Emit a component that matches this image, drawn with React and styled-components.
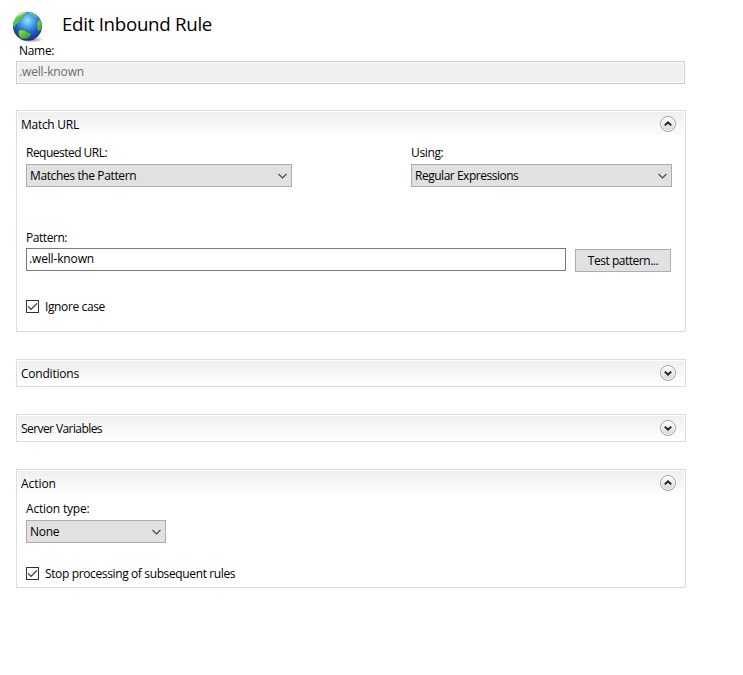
import React from "react";
import styled, { createGlobalStyle } from "styled-components";

const GlobalStyle = createGlobalStyle`
  * { box-sizing: border-box; }
  body {
    margin: 0;
    background: #fff;
    color: #000;
    font: 12px/16px "Open Sans", "Noto Sans", sans-serif;
  }
`;

const Page = styled.main`
  width: 743px;
  height: 675px;
  padding: 8px 57px 0 16px;
  overflow: hidden;
  background: #fff;
`;

const Header = styled.header`
  display: flex;
  height: 34px;
  margin-left: -6px;
`;

const Title = styled.h1`
  margin: 3px 0 0 16px;
  font-size: 18.7px;
  line-height: 26px;
  font-weight: 400;
  white-space: nowrap;
  letter-spacing: -0.28px;
`;

const Text = styled.span`
  display: block;
  height: 16px;
  line-height: 18px;
  white-space: nowrap;
  letter-spacing: ${(p) => p.$track || 0}px;
`;

const NameLabel = styled.div`
  height: 19px;
  padding-left: 3px;
`;

const NameBox = styled.div`
  width: 669px;
  height: 23px;
  padding: 1px 2px;
  border: 1px solid #ccc;
  box-shadow: inset 0 0 0 1px #fff;
  background: #f0f0f0;
  color: #6d6d6d;
`;

const Panel = styled.section`
  width: 670px;
  height: ${(p) => p.$height}px;
  margin-top: ${(p) => p.$gap || 27}px;
  border: 1px solid #dcdcdc;
  padding: 1px;
`;

const PanelHeader = styled.div`
  display: flex;
  justify-content: space-between;
  height: ${(p) => (p.$closed ? 24 : 26)}px;
  padding: 4px 7px 0 3px;
  background: linear-gradient(#efefef, #fff);
`;

const Toggle = styled.svg`
  display: block;
  width: 18px;
  height: 18px;
  margin-top: -1px;
`;

const PanelBody = styled.div`
  padding: ${(p) => p.$top}px 0 0 8px;
`;

const FieldRow = styled.div`
  display: flex;
  gap: 119px;
`;

const Field = styled.div`
  display: flex;
  flex-direction: column;
  gap: 4px;
`;

const Select = styled.div`
  display: flex;
  justify-content: space-between;
  width: ${(p) => p.$width}px;
  height: 23px;
  padding: 2px 3px 0;
  border: 1px solid #adadad;
  background: #e1e1e1;
`;

const SelectArrow = styled.svg`
  width: 11px;
  height: 7px;
  margin-top: 6px;
`;

const PatternField = styled.div`
  margin-top: 42px;
`;

const PatternRow = styled.div`
  display: flex;
  gap: 9px;
  margin-top: 3px;
`;

const Input = styled.div`
  width: 540px;
  height: 23px;
  padding: 1px 2px;
  border: 1px solid #7a7a7a;
  background: #fff;
`;

const Button = styled.div`
  display: flex;
  justify-content: center;
  width: 96px;
  height: 23px;
  margin-top: 1px;
  padding-top: 2px;
  border: 1px solid #adadad;
  background: #e1e1e1;
`;

const CheckRow = styled.div`
  display: flex;
  gap: 6px;
  margin-top: ${(p) => p.$top}px;
`;

const CheckMark = styled.svg`
  width: 13px;
  height: 13px;
  margin-top: 2px;
`;

function Globe() {
  return (
    <svg width="36" height="36" viewBox="0 0 36 36">
      <defs>
        <radialGradient id="ocean" cx=".5" cy=".3" r=".72">
          <stop offset="0" stopColor="#9be4fa" />
          <stop offset=".3" stopColor="#4aa6e6" />
          <stop offset=".6" stopColor="#2460c8" />
          <stop offset="1" stopColor="#15238c" />
        </radialGradient>
        <linearGradient id="land" x1="0" y1="0" x2="1" y2="1">
          <stop offset="0" stopColor="#9be05a" />
          <stop offset="1" stopColor="#1f9a2c" />
        </linearGradient>
        <radialGradient id="shade">
          <stop offset="0" stopColor="#444" stopOpacity=".8" />
          <stop offset="1" stopColor="#888" stopOpacity="0" />
        </radialGradient>
        <clipPath id="disc"><circle cx="17.5" cy="18.3" r="14.5" /></clipPath>
      </defs>
      <ellipse cx="21" cy="31.5" rx="13" ry="3.2" fill="url(#shade)" />
      <circle cx="17.5" cy="18.3" r="14.5" fill="url(#ocean)" />
      <g clipPath="url(#disc)">
        <path d="M3 17C4 9 9 4 16 4l-1 2 1 1-3 2 0 2-3 1-1 3-3 1-1 3-2-1z" fill="url(#land)" />
        <path d="M9 6l4-2h3l-2 2-3 1-3 2z" fill="#d4f4c0" fillOpacity=".7" />
        <path d="M19 4l5 2 4 4-3-1-2-2-3-1z" fill="#7bd650" />
        <path d="M28 14l2-3 2 4v6l-3 2-2-3 1-2-1-2z" fill="url(#land)" />
        <path d="M8.500 23l2-1.500 4 .5 3 2 4 1-1 3-3 2.500-4 .5-3-1-2-3z" fill="url(#land)" stroke="#126c46" strokeWidth=".6" />
      </g>
    </svg>
  );
}

function Chevron({ closed }) {
  return (
    <Toggle viewBox="0 0 18 18">
      <defs>
        <linearGradient id="knob" x1="0" y1="0" x2="0" y2="1">
          <stop offset="0" stopColor="#fff" />
          <stop offset="1" stopColor="#d6d6d6" />
        </linearGradient>
      </defs>
      <circle cx="9" cy="9" r="7.5" fill="url(#knob)" stroke="#a0a0a0" />
      <circle cx="9" cy="9" r="6.5" fill="none" stroke="#fff" strokeOpacity=".6" />
      <path
        d={closed ? "M5.8 7.6L9 10.7l3.2-3.1" : "M5.8 10.4L9 7.3l3.2 3.1"}
        fill="none"
        stroke="#222"
        strokeWidth="2"
      />
    </Toggle>
  );
}

function Section({ title, track, height, gap, closed, bodyTop, children }) {
  return (
    <Panel $height={height} $gap={gap}>
      <PanelHeader $closed={closed}>
        <Text $track={track}>{title}</Text>
        <Chevron closed={closed} />
      </PanelHeader>
      {children && <PanelBody $top={bodyTop}>{children}</PanelBody>}
    </Panel>
  );
}

function Dropdown({ label, labelTrack, value, track, width }) {
  return (
    <Field>
      <Text $track={labelTrack}>{label}</Text>
      <Select $width={width}>
        <Text $track={track}>{value}</Text>
        <SelectArrow viewBox="0 0 11 7">
          <path d="M1.5 1l4 4 4-4" fill="none" stroke="#444" strokeWidth="1.1" />
        </SelectArrow>
      </Select>
    </Field>
  );
}

function Checkbox({ label, track, top }) {
  return (
    <CheckRow $top={top}>
      <CheckMark viewBox="0 0 13 13">
        <rect x=".5" y=".5" width="12" height="12" fill="#fff" stroke="#333" />
        <path d="M2 6.300l3 3 6-6" fill="none" stroke="#333" strokeWidth="1.2" />
      </CheckMark>
      <Text $track={track}>{label}</Text>
    </CheckRow>
  );
}

export default function App() {
  return (
    <>
      <GlobalStyle />
      <Page>
        <Header>
          <Globe />
          <Title>Edit Inbound Rule</Title>
        </Header>
        <NameLabel><Text $track={-0.3}>Name:</Text></NameLabel>
        <NameBox><Text $track={-0.15}>.well-known</Text></NameBox>

        <Section title="Match URL" track={-0.28} height={222} gap={26} bodyTop={6}>
          <FieldRow>
            <Dropdown label="Requested URL:" labelTrack={-0.52} value="Matches the Pattern" track={-0.38} width={266} />
            <Dropdown label="Using:" labelTrack={-0.35} value="Regular Expressions" track={-0.48} width={261} />
          </FieldRow>
          <PatternField>
            <Text $track={-0.45}>Pattern:</Text>
            <PatternRow>
              <Input><Text $track={-0.15}>.well-known</Text></Input>
              <Button><Text $track={-0.47}>Test pattern...</Text></Button>
            </PatternRow>
          </PatternField>
          <Checkbox label="Ignore case" track={-0.38} top={26} />
        </Section>
        <Section title="Conditions" track={-0.22} height={28} closed />
        <Section title="Server Variables" track={-0.58} height={28} closed />
        <Section title="Action" track={-0.05} height={119} bodyTop={3}>
          <Dropdown label="Action type:" labelTrack={-0.2} value="None" track={-0.25} width={140} />
          <Checkbox label="Stop processing of subsequent rules" track={-0.37} top={22} />
        </Section>
      </Page>
    </>
  );
}
